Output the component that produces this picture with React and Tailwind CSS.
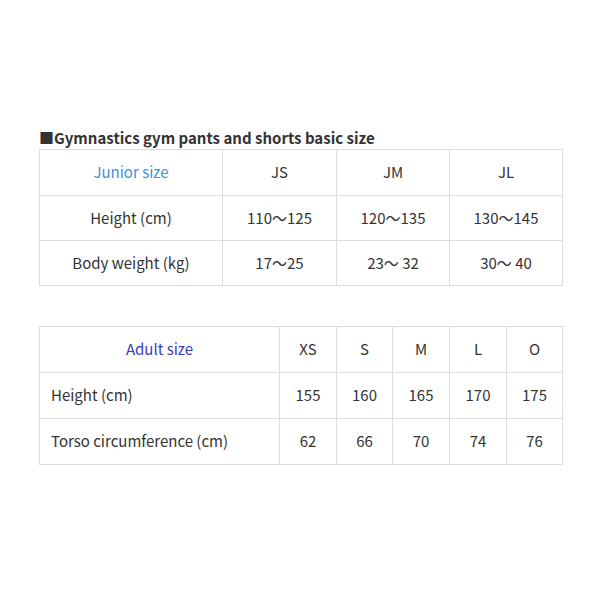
const font = { fontFamily: '"Noto Sans CJK JP", "Noto Sans", sans-serif' };

const junior = [
  ["Height (cm)", "110～125", "120～135", "130～145"],
  ["Body weight (kg)", "17～25", "23～ 32", "30～ 40"],
];

const adult = [
  ["Height (cm)", "155", "160", "165", "170", "175"],
  ["Torso circumference (cm)", "62", "66", "70", "74", "76"],
];

export default function App() {
  return (
    <div className="h-[593px] w-[598px] bg-white text-[#333]" style={font}>
      <div className="pl-[39px] pt-[127px]">
        <h2 className="text-[15px] font-bold leading-[22px] text-[#333]">■Gymnastics gym pants and shorts basic size</h2>
        <table className="w-[523px] table-fixed border-collapse text-[15px]">
          <colgroup>
            <col className="w-[183px]" />
            <col className="w-[114px]" />
            <col className="w-[113px]" />
            <col className="w-[113px]" />
          </colgroup>
          <tbody>
            <tr className="h-[46px]">
              <td className="border border-[#dcdcdc] text-center text-[#3d8fe0]">Junior size</td>
              <td className="border border-[#dcdcdc] text-center">JS</td>
              <td className="border border-[#dcdcdc] text-center">JM</td>
              <td className="border border-[#dcdcdc] text-center">JL</td>
            </tr>
            {junior.map((row) => (
              <tr key={row[0]} className="h-[45px]">
                {row.map((c, i) => (
                  <td key={i} className="border border-[#dcdcdc] text-center">{c}</td>
                ))}
              </tr>
            ))}
          </tbody>
        </table>

        <table className="mt-[40px] w-[523px] table-fixed border-collapse text-[15px]">
          <colgroup>
            <col className="w-[240px]" />
            <col className="w-[57px]" />
            <col className="w-[56px]" />
            <col className="w-[57px]" />
            <col className="w-[57px]" />
            <col className="w-[56px]" />
          </colgroup>
          <tbody>
            <tr className="h-[46px]">
              <td className="border border-[#dcdcdc] text-center text-[#3b3bbd]">Adult size</td>
              {["XS", "S", "M", "L", "O"].map((s) => (
                <td key={s} className="border border-[#dcdcdc] text-center">{s}</td>
              ))}
            </tr>
            {adult.map((row) => (
              <tr key={row[0]} className="h-[46px]">
                {row.map((c, i) => (
                  <td key={i} className={`border border-[#dcdcdc] ${i === 0 ? "pl-[11px] text-left" : "text-center"}`}>{c}</td>
                ))}
              </tr>
            ))}
          </tbody>
        </table>
      </div>
    </div>
  );
}
